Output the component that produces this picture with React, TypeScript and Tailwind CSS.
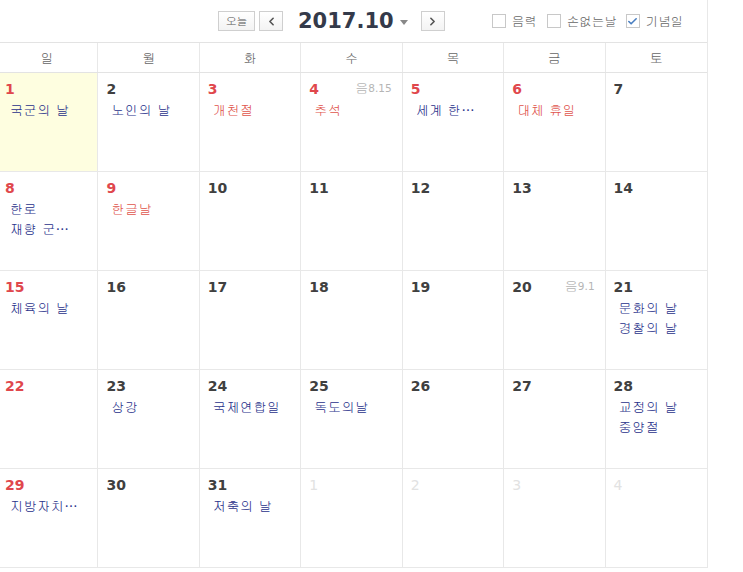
import { ChevronLeft, ChevronRight, Check } from "lucide-react";

type Ev = { t: string; red?: boolean };
type Day = { d: number; red?: boolean; other?: boolean; today?: boolean; lunar?: string; ev?: Ev[] };

const weekdays = ["일", "월", "화", "수", "목", "금", "토"];

const weeks: Day[][] = [
  [
    { d: 1, red: true, today: true, ev: [{ t: "국군의 날" }] },
    { d: 2, ev: [{ t: "노인의 날" }] },
    { d: 3, red: true, ev: [{ t: "개천절", red: true }] },
    { d: 4, red: true, lunar: "8.15", ev: [{ t: "추석", red: true }] },
    { d: 5, red: true, ev: [{ t: "세계 한⋯" }] },
    { d: 6, red: true, ev: [{ t: "대체 휴일", red: true }] },
    { d: 7 },
  ],
  [
    { d: 8, red: true, ev: [{ t: "한로" }, { t: "재향 군⋯" }] },
    { d: 9, red: true, ev: [{ t: "한글날", red: true }] },
    { d: 10 },
    { d: 11 },
    { d: 12 },
    { d: 13 },
    { d: 14 },
  ],
  [
    { d: 15, red: true, ev: [{ t: "체육의 날" }] },
    { d: 16 },
    { d: 17 },
    { d: 18 },
    { d: 19 },
    { d: 20, lunar: "9.1" },
    { d: 21, ev: [{ t: "문화의 날" }, { t: "경찰의 날" }] },
  ],
  [
    { d: 22, red: true },
    { d: 23, ev: [{ t: "상강" }] },
    { d: 24, ev: [{ t: "국제연합일" }] },
    { d: 25, ev: [{ t: "독도의날" }] },
    { d: 26 },
    { d: 27 },
    { d: 28, ev: [{ t: "교정의 날" }, { t: "중양절" }] },
  ],
  [
    { d: 29, red: true, ev: [{ t: "지방자치⋯" }] },
    { d: 30 },
    { d: 31, ev: [{ t: "저축의 날" }] },
    { d: 1, other: true },
    { d: 2, other: true },
    { d: 3, other: true },
    { d: 4, other: true },
  ],
];

const kr = "font-['Gulim','Noto_Sans_CJK_KR',sans-serif]";

const Box = ({ checked }: { checked?: boolean }) => (
  <span className="flex h-[14px] w-[14px] items-center justify-center border border-[#c8c8c8] bg-white">
    {checked && <Check size={11} strokeWidth={3.5} className="text-[#4a7fc1]" />}
  </span>
);

const Cell = ({ day, col }: { day: Day; col: number }) => {
  const num = day.other
    ? "text-[#e2e2e2] font-normal"
    : day.red
    ? "text-[#e0474c] font-bold"
    : "text-[#404040] font-bold";
  return (
    <div
      className={`h-[99px] border-b border-[#e8e8e8] ${col < 6 ? "border-r" : ""} ${
        day.today ? "bg-[#fefee0]" : "bg-white"
      }`}
    >
      <div className="flex items-start justify-between pl-[8px] pr-[10px] pt-[7px]">
        <span className={`font-['DejaVu_Sans',sans-serif] text-[14px] leading-[18px] ${num}`}>{day.d}</span>
        {day.lunar && (
          <span className="mt-[1px] flex items-center leading-[14px] text-[#b5b5b5]">
            <span className={`${kr} text-[13px]`}>음</span>
            <span className="font-['DejaVu_Sans',sans-serif] text-[10.5px]">{day.lunar}</span>
          </span>
        )}
      </div>
      <div className="pl-[13px] pt-[2px]">
        {day.ev?.map((e, i) => (
          <div
            key={i}
            className={`${kr} text-[13px] leading-[20px] tracking-[0.6px] ${
              e.red ? "text-[#e0544c]" : "text-[#28318a]"
            }`}
          >
            {e.t}
          </div>
        ))}
      </div>
    </div>
  );
};

export default function App() {
  return (
    <div className="h-[572px] w-[743px] overflow-hidden bg-white">
      <div className="ml-[-3px] w-[711px] border-r border-[#e8e8e8]">
        <div className="flex h-[42px] items-center pl-[221px]">
          <button className={`${kr} flex h-[20px] w-[37px] items-center justify-center border border-[#cfcfcf] bg-gradient-to-b from-white to-[#f3f3f3] text-[11px] text-[#555]`}>
            오늘
          </button>
          <button className="ml-[4px] flex h-[20px] w-[24px] items-center justify-center border border-[#cfcfcf] bg-gradient-to-b from-white to-[#f3f3f3] text-[#555]">
            <ChevronLeft size={13} strokeWidth={3} />
          </button>
          <span className="ml-[15px] font-['DejaVu_Sans',sans-serif] text-[21px] font-bold leading-none text-[#343a4a]">
            2017.10
          </span>
          <span className="ml-[6px] mt-[2px] h-0 w-0 border-x-[4px] border-t-[5px] border-x-transparent border-t-[#888]" />
          <button className="ml-[13px] flex h-[20px] w-[24px] items-center justify-center border border-[#cfcfcf] bg-gradient-to-b from-white to-[#f3f3f3] text-[#555]">
            <ChevronRight size={13} strokeWidth={3} />
          </button>
          <div className={`${kr} ml-[47px] flex items-center text-[12.5px] text-[#666]`}>
            <Box />
            <span className="ml-[6px]">음력</span>
            <span className="ml-[10px]"><Box /></span>
            <span className="ml-[6px]">손없는날</span>
            <span className="ml-[9px]"><Box checked /></span>
            <span className="ml-[6px]">기념일</span>
          </div>
        </div>
        <div className="grid grid-cols-7 border-y border-[#e3e3e3]">
          {weekdays.map((w, i) => (
            <div
              key={w}
              className={`${kr} flex h-[29px] items-center justify-center border-[#e8e8e8] text-[13px] text-[#666] ${
                i < 6 ? "border-r" : ""
              }`}
            >
              {w}
            </div>
          ))}
        </div>
        <div className="grid grid-cols-7">
          {weeks.flatMap((wk, r) => wk.map((day, c) => <Cell key={`${r}-${c}`} day={day} col={c} />))}
        </div>
      </div>
    </div>
  );
}
